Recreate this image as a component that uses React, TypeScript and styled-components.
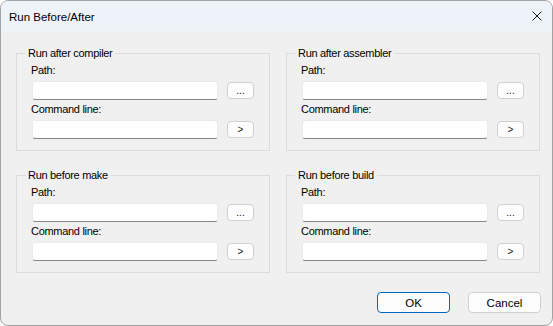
import React from 'react';
import styled, { createGlobalStyle } from 'styled-components';

type GroupProps = {
    title: string;
};

const groups: string[] = [
    'Run after compiler',
    'Run after assembler',
    'Run before make',
    'Run before build',
];

const CommandGroup: React.FC<GroupProps> = ({ title }) => {
    return (
        <Group>
            <Legend>{title}</Legend>
            <FieldLabel>Path:</FieldLabel>
            <FieldRow>
                <TextInput type="text" />
                <SmallButton>...</SmallButton>
            </FieldRow>
            <FieldLabel $gap={3}>Command line:</FieldLabel>
            <FieldRow>
                <TextInput type="text" />
                <SmallButton>&gt;</SmallButton>
            </FieldRow>
        </Group>
    );
};

const App: React.FC = () => {
    return (
        <>
            <GlobalStyle />
            <Window>
                <TitleBar>
                    <Title>Run Before/After</Title>
                    <CloseIcon width="10" height="10" viewBox="0 0 10 10">
                        <path
                            d="M0.5 0.5 L9.5 9.5 M9.5 0.5 L0.5 9.5"
                            stroke="#1b1b1b"
                            strokeWidth="1"
                            fill="none"
                        />
                    </CloseIcon>
                </TitleBar>
                <Body>
                    <GroupGrid>
                        {groups.map((g) => (
                            <CommandGroup key={g} title={g} />
                        ))}
                    </GroupGrid>
                    <Footer>
                        <DialogButton $primary>OK</DialogButton>
                        <DialogButton>Cancel</DialogButton>
                    </Footer>
                </Body>
            </Window>
        </>
    );
};

const GlobalStyle = createGlobalStyle`
    body {
        margin: 0;
        background: #ffffff;
        font-family: "Liberation Sans", Arial, sans-serif;
    }
`;

const Window = styled.div`
    width: 553px;
    height: 326px;
    box-sizing: border-box;
    border: 1px solid #a3a3a3;
    border-radius: 8px;
    overflow: hidden;
    background: #f0f0f0;
    display: flex;
    flex-direction: column;
`;

const TitleBar = styled.div`
    height: 30px;
    flex-shrink: 0;
    display: flex;
    align-items: center;
    justify-content: space-between;
    padding: 2px 10px 0 8px;
    box-sizing: border-box;
    background: #eef3f9;
`;

const Title = styled.span`
    font-size: 11.5px;
    color: #000000;
`;

const CloseIcon = styled.svg`
    display: block;
    margin-top: -3px;
`;

const Body = styled.div`
    flex: 1;
    display: flex;
    flex-direction: column;
    padding: 22px 11px 0 15px;
`;

const GroupGrid = styled.div`
    display: grid;
    grid-template-columns: 254px 254px;
    column-gap: 16px;
    row-gap: 24px;
`;

const Group = styled.div`
    position: relative;
    box-sizing: border-box;
    height: 98px;
    border: 1px solid #dcdcdc;
    padding: 10px 15px 0 15px;
    display: flex;
    flex-direction: column;
`;

const Legend = styled.span`
    position: absolute;
    top: -7px;
    left: 8px;
    padding: 0 3px;
    background: #f0f0f0;
    font-size: 11px;
    line-height: 13px;
    letter-spacing: -0.3px;
    color: #000000;
`;

const FieldLabel = styled.div<{ $gap?: number }>`
    margin: ${(props) => props.$gap || 0}px 0 4px -1px;
    font-size: 11px;
    line-height: 13px;
    letter-spacing: -0.3px;
    color: #000000;
`;

const FieldRow = styled.div`
    display: flex;
    align-items: center;
    gap: 9px;
`;

const TextInput = styled.input`
    box-sizing: border-box;
    width: 186px;
    height: 19px;
    margin: 0;
    padding: 0 4px;
    background: #ffffff;
    border: 1px solid #ebebeb;
    border-bottom-color: #868686;
    border-radius: 3px;
    outline: none;
`;

const SmallButton = styled.button`
    box-sizing: border-box;
    width: 27px;
    height: 17px;
    padding: 0;
    background: #fdfdfd;
    border: 1px solid #d0d0d0;
    border-radius: 4px;
    font-family: "Liberation Sans", Arial, sans-serif;
    font-size: 10px;
    line-height: 1;
    color: #1a1a1a;
`;

const Footer = styled.div`
    display: flex;
    justify-content: flex-end;
    gap: 18px;
    margin-top: 19px;
`;

const DialogButton = styled.button<{ $primary?: boolean }>`
    box-sizing: border-box;
    width: 73px;
    height: 21px;
    padding: 0;
    background: #fdfdfd;
    border: 1px solid ${(props) => (props.$primary ? '#0067c0' : '#d0d0d0')};
    border-radius: 4px;
    font-family: "Liberation Sans", Arial, sans-serif;
    font-size: 11.5px;
    color: #000000;
`;

export default App;
